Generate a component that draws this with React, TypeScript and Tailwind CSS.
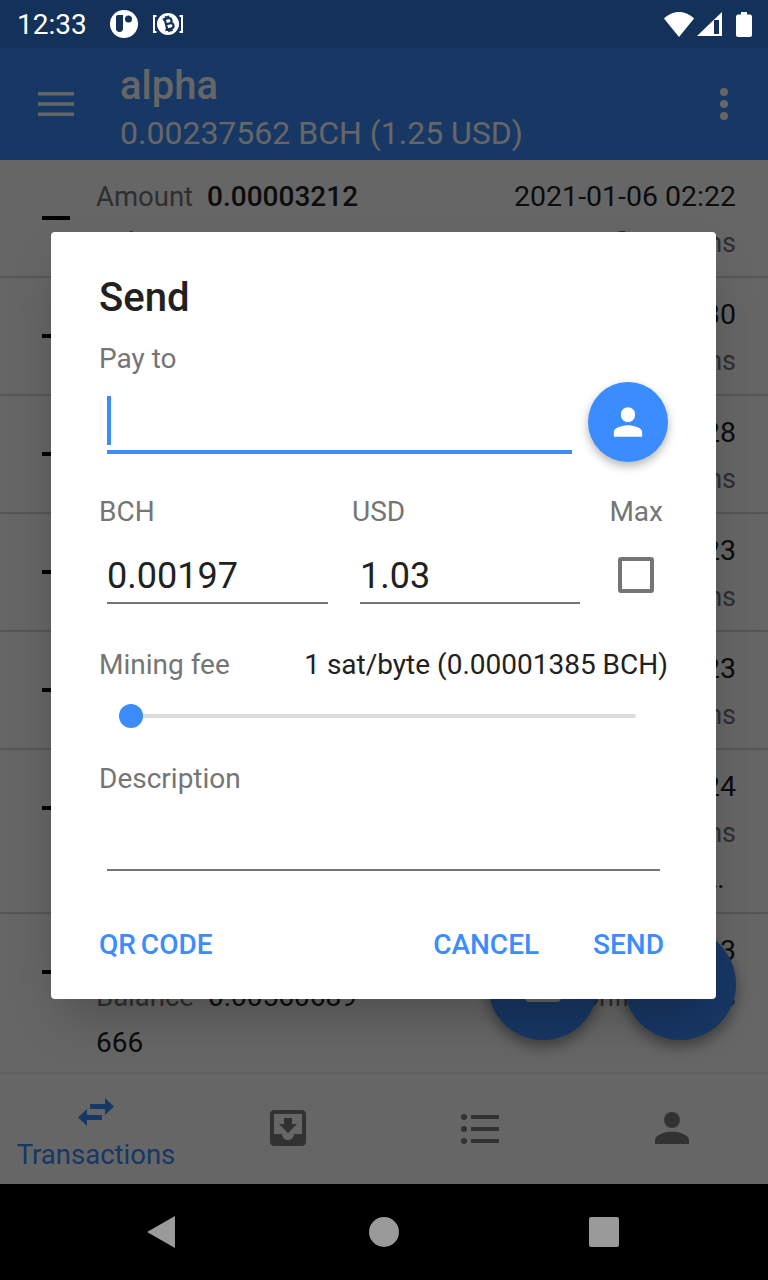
import React from 'react';

const roboto = { fontFamily: 'Roboto, sans-serif' };

const StatusBar = () => (
  <div className="h-12 bg-[#14315a] flex items-center pl-[17px] pr-[16px] text-white relative z-30">
    <span className="text-[28px] leading-none mt-[1px]">12:33</span>
    <svg className="ml-[23px]" width="28" height="28" viewBox="0 0 28 28">
      <circle cx="14" cy="14" r="14" fill="#fff" />
      <path d="M8 5h5v13.500c0 2-1.100 3.500-3.500 3.500S6 20.500 6 18.500V7c0-1.200.8-2 2-2z" fill="#14315a" />
      <circle cx="18.500" cy="9" r="3.500" fill="#14315a" />
    </svg>
    <svg className="ml-[15px]" width="31" height="26" viewBox="0 0 31 26">
      <circle cx="15" cy="13" r="11" fill="#fff" />
      <path d="M0 4h3.500v2H2v14h1.500v2H0zM30 4h-3.500v2H28v14h-1.500v2H30z" fill="#fff" />
      <g transform="rotate(-14 15 13)" fill="none" stroke="#14315a" strokeWidth="2.200">
        <path d="M11 7.500h5.500c1.800 0 2.800 1.100 2.800 2.600s-1 2.700-2.800 2.700H13m0 0h4c1.900 0 3 1.100 3 2.700s-1.100 2.800-3 2.800h-6M13 7.500v11M14.500 5v2.500M17 5v2.500M14.500 18.500V21M17 18.500V21" />
      </g>
    </svg>
    <div className="ml-auto flex items-center">
      <svg width="30" height="25" viewBox="0 0 30 25">
        <path d="M15 25 0 6.500C4 2.500 9.500 0 15 0s11 2.500 15 6.500z" fill="#fff" />
      </svg>
      <svg className="ml-[3px]" width="25" height="24" viewBox="0 0 25 24">
        <path d="M25 0V24H0z" fill="#fff" />
        <path d="M17 8h5v14h-5z" fill="#14315a" />
      </svg>
      <svg className="ml-[14px]" width="16" height="25" viewBox="0 0 16 25">
        <path d="M5 0h6v2.500h3c1 0 2 1 2 2V23c0 1-1 2-2 2H2c-1 0-2-1-2-2V4.500c0-1 1-2 2-2h3z" fill="#fff" />
      </svg>
    </div>
  </div>
);

const AppBar = () => (
  <div className="h-28 bg-[#3a8bfb] flex items-center text-white shrink-0">
    <svg className="ml-[38px]" width="36" height="24" viewBox="0 0 36 24">
      <path d="M0 0h36v3.500H0zM0 10.250h36v3.500H0zM0 20.500h36V24H0z" fill="#fff" />
    </svg>
    <div className="ml-[46px] flex flex-col self-start pt-[13px]">
      <span className="text-[40px] leading-[50px] font-medium">alpha</span>
      <span className="text-[32px] leading-[42px] mt-[1px]">0.00237562 BCH (1.25 USD)</span>
    </div>
    <svg className="ml-auto mr-[40px]" width="8" height="32" viewBox="0 0 8 32">
      <circle cx="4" cy="4" r="4" fill="#fff" />
      <circle cx="4" cy="16" r="4" fill="#fff" />
      <circle cx="4" cy="28" r="4" fill="#fff" />
    </svg>
  </div>
);

type Row = { amount: string; date: string; balance: string; conf: string; memo?: string; h: string };

const rows: Row[] = [
  { amount: '0.00003212', date: '2021-01-06 02:22', balance: '0.00233962', conf: '0 confirmations', h: 'h-[118px]' },
  { amount: '0.00003212', date: '2021-01-06 02:30', balance: '0.00237174', conf: '2 confirmations', h: 'h-[118px]' },
  { amount: '0.00003212', date: '2021-01-06 02:28', balance: '0.00240386', conf: '3 confirmations', h: 'h-[118px]' },
  { amount: '0.00003212', date: '2021-01-06 02:23', balance: '0.00243598', conf: '4 confirmations', h: 'h-[118px]' },
  { amount: '0.00003212', date: '2021-01-06 02:23', balance: '0.00246810', conf: '5 confirmations', h: 'h-[118px]' },
  {
    amount: '0.00003212',
    date: '2021-01-06 02:24',
    balance: '0.00250022',
    conf: '6 confirmations',
    memo: 'sent from alpha to the other wallet for a test of the long description',
    h: 'h-[164px]',
  },
  { amount: '0.00003212', date: '2021-01-05 02:23', balance: '0.00560689', conf: '9 confirmations', memo: '666', h: 'h-[160px]' },
];

const TxRow = ({ r }: { r: Row }) => (
  <div className={`${r.h} shrink-0 border-b-2 border-[#d8d8d8] relative flex`}>
    <div className="w-[42px] shrink-0" />
    <div className="w-[28px] h-[4px] bg-black mt-[56px] shrink-0" />
    <div className="flex-1 min-w-0 pl-[26px] pr-[32px] pt-[16px] text-[28px] leading-[42px]">
      <div className="flex justify-between text-[#212121]">
        <span>
          <span className="text-[#757575] text-[27.500px]">Amount</span>
          <span className="font-medium ml-[14px]">{r.amount}</span>
        </span>
        <span className="text-[28.500px]">{r.date}</span>
      </div>
      <div className="flex justify-between mt-[4px] text-[#212121]">
        <span>
          <span className="text-[#757575] text-[27.500px]">Balance</span>
          <span className="ml-[14px]">{r.balance}</span>
        </span>
        <span className="text-[#757575] text-[27px]">{r.conf}</span>
      </div>
      {r.memo && <div className="text-[#212121] mt-[4px] truncate">{r.memo}</div>}
    </div>
  </div>
);

const BottomNav = () => (
  <div className="h-[112px] bg-white flex shrink-0 border-t-2 border-[#f2f2f2]">
    <div className="w-[192px] flex flex-col items-center pt-[24px] text-[#3a8bfb]">
      <svg width="36" height="28" viewBox="0 0 36 28" fill="currentColor">
        <path d="M9 11 0 19.500 9 28v-6h15v-5H9zM27 0v6H12v5h15v6l9-8.500z" />
      </svg>
      <span className="text-[27.500px] leading-[34px] mt-[12px]">Transactions</span>
    </div>
    <div className="w-[192px] flex justify-center pt-[36px]">
      <svg width="36" height="36" viewBox="0 0 36 36" fill="#7d7d7d">
        <path fillRule="evenodd" d="M4 0h28c2.200 0 4 1.800 4 4v28c0 2.200-1.800 4-4 4H4c-2.200 0-4-1.800-4-4V4c0-2.200 1.800-4 4-4zM4 4v20h8c0 3.300 2.700 6 6 6s6-2.700 6-6h8V4zM14 8h8v6h5l-9 9-9-9h5z" />
      </svg>
    </div>
    <div className="w-[192px] flex justify-center pt-[39px]">
      <svg width="38" height="32" viewBox="0 0 38 32" fill="#7d7d7d">
        <circle cx="3" cy="4" r="3" />
        <circle cx="3" cy="16" r="3" />
        <circle cx="3" cy="28" r="3" />
        <path d="M10 2h28v4H10zM10 14h28v4H10zM10 26h28v4H10z" />
      </svg>
    </div>
    <div className="w-[192px] flex justify-center pt-[38px]">
      <svg width="34" height="32" viewBox="0 0 34 32" fill="#7d7d7d">
        <circle cx="17" cy="8" r="8" />
        <path d="M0 32v-4c0-5.500 11-8.500 17-8.500S34 22.500 34 28v4z" />
      </svg>
    </div>
  </div>
);

const NavBar = () => (
  <div className="h-24 bg-black flex items-center relative z-30 shrink-0">
    <svg className="ml-[147px]" width="28" height="32" viewBox="0 0 28 32">
      <path d="M28 0v32L0 16z" fill="#9a9a9a" />
    </svg>
    <div className="ml-[194px] w-[30px] h-[30px] rounded-full bg-[#9a9a9a]" />
    <div className="ml-[190px] w-[30px] h-[30px] rounded-[2px] bg-[#9a9a9a]" />
  </div>
);

const Fab = ({ className, children }: { className: string; children: React.ReactNode }) => (
  <div className={`absolute h-[112px] rounded-full bg-[#3a8bfb] shadow-[0_6px_14px_rgba(0,0,0,0.4)] flex items-center justify-center ${className}`}>
    {children}
  </div>
);

const Label = ({ children, className = '' }: { children: React.ReactNode; className?: string }) => (
  <span className={`text-[28px] leading-[34px] text-[#757575] ${className}`}>{children}</span>
);

const SendDialog = () => (
  <div className="absolute left-[51px] top-[232px] w-[665px] h-[767px] bg-white rounded-[4px] z-20 shadow-2xl flex flex-col pl-[48px] pr-[48px] text-[#212121]">
    <div className="text-[40px] leading-[46px] font-medium mt-[43px]">Send</div>
    <Label className="mt-[21px]">Pay to</Label>

    <div className="flex mt-[6px] items-start">
      <div className="ml-[8px] w-[465px] h-[71px] border-b-[4px] border-[#3a8cff] mt-[1px] shrink-0 relative">
        <div className="absolute left-0 top-[13px] w-[4px] h-[49px] bg-[#3a8cff]" />
      </div>
      <div className="ml-[16px] w-[80px] h-[80px] rounded-full bg-[#3a8cff] shadow-[0_4px_10px_rgba(0,0,0,0.3)] flex items-center justify-center">
        <svg width="34" height="32" viewBox="0 0 24 24" preserveAspectRatio="none">
          <path d="M12 12c2.760 0 5-2.240 5-5.500S14.760 1 12 1 7 3.240 7 6.500 9.240 12 12 12zm0 2.500c-3.340 0-10 1.700-10 5V23h20v-3.500c0-3.300-6.660-5-10-5z" fill="#fff" />
        </svg>
      </div>
    </div>

    <div className="flex mt-[33px]">
      <div className="w-[253px]">
        <Label>BCH</Label>
      </div>
      <Label>USD</Label>
      <Label className="ml-auto mr-[5px]">Max</Label>
    </div>

    <div className="flex mt-[19px] items-start">
      <div className="ml-[8px] w-[221px] h-[56px] border-b-2 border-[#757575] text-[36px] leading-[56px]">0.00197</div>
      <div className="ml-[32px] w-[220px] h-[56px] border-b-2 border-[#757575] text-[36px] leading-[56px]">1.03</div>
      <div className="ml-[38px] mt-[9px] w-[36px] h-[36px] rounded-[3px] border-[4px] border-[#757575]" />
    </div>

    <div className="flex justify-between mt-[44px]">
      <Label>Mining fee</Label>
      <span className="text-[28px] leading-[34px]">1 sat/byte (0.00001385 BCH)</span>
    </div>

    <div className="ml-[20px] w-[517px] relative mt-[21px] h-[26px] flex items-center">
      <div className="w-full h-[4px] bg-[#dcdcdc] rounded-full" />
      <div className="absolute left-0 top-[1px] w-[24px] h-[24px] rounded-full bg-[#3a8cff]" />
    </div>

    <Label className="mt-[33px]">Description</Label>

    <div className="ml-[8px] w-[553px] h-[75px] border-b-2 border-[#757575] shrink-0" />

    <div className="flex mt-[57px] text-[28px] leading-[34px] font-medium text-[#3a8cff]">
      <span className="[word-spacing:-2px]">QR CODE</span>
      <span className="ml-auto">CANCEL</span>
      <span className="ml-[54px] mr-[4px]">SEND</span>
    </div>
  </div>
);

export default function App() {
  return (
    <div className="w-[768px] h-[1280px] overflow-hidden relative flex flex-col bg-white" style={roboto}>
      <StatusBar />
      <AppBar />
      <div className="flex-1 overflow-hidden flex flex-col relative">
        {rows.map((r, i) => (
          <TxRow key={i} r={r} />
        ))}
        <Fab className="w-[110px] right-[170px] top-[768px]">
          <svg width="36" height="36" viewBox="0 0 36 36">
            <path d="M4 0h28c2.200 0 4 1.800 4 4v28c0 2.200-1.800 4-4 4H4c-2.200 0-4-1.800-4-4V4c0-2.200 1.800-4 4-4z" fill="#fff" />
          </svg>
        </Fab>
        <Fab className="w-[112px] right-[32px] top-[768px]">
          <svg width="40" height="40" viewBox="0 0 24 24">
            <path d="M2.010 21 23 12 2.010 3 2 10l15 2-15 2z" fill="#fff" />
          </svg>
        </Fab>
      </div>
      <BottomNav />
      <NavBar />
      <div className="absolute left-0 right-0 top-[48px] h-[1136px] bg-black/60 z-10" />
      <SendDialog />
    </div>
  );
}
